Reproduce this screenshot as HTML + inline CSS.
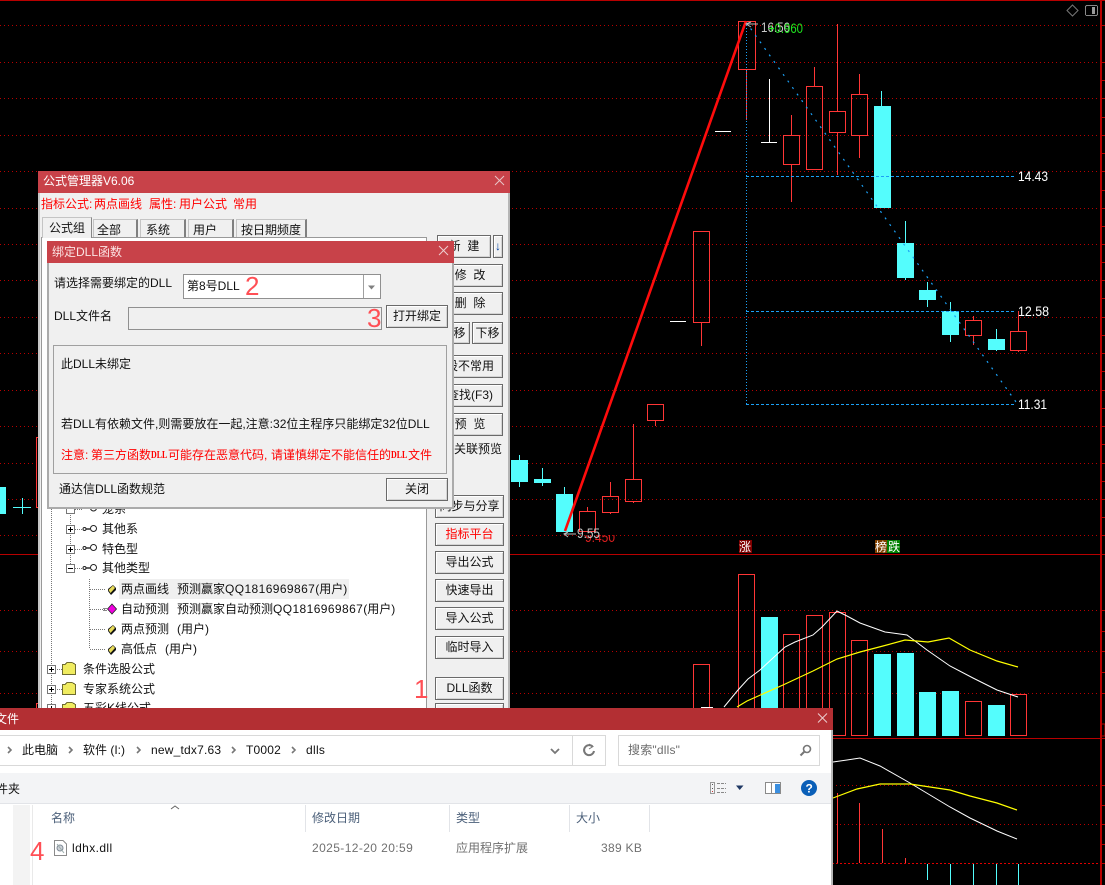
<!DOCTYPE html>
<html lang="zh">
<head>
<meta charset="utf-8">
<title>公式管理器</title>
<style>
html,body{margin:0;padding:0;background:#000;}
#p{position:relative;width:1105px;height:885px;overflow:hidden;background:#000;font:12px/16px "Liberation Sans","Noto Sans CJK SC",sans-serif;color:#111;}
svg{position:absolute;left:0;top:0;}
.a{position:absolute;box-sizing:border-box;}
.t{position:absolute;white-space:nowrap;line-height:16px;font-size:12px;}
.b{position:absolute;box-sizing:border-box;background:#f0f0f0;border:1px solid #6a6a6a;box-shadow:inset 1px 1px 0 #fff,inset -1px -1px 0 #d4d4d4;text-align:center;white-space:nowrap;font-size:12px;}
.tab{position:absolute;box-sizing:border-box;background:#f0f0f0;border:1px solid #c4c4c4;border-bottom:0;border-right:2px solid #808080;text-align:left;font-size:12px;line-height:20px;white-space:nowrap;}
.r{color:#ff0000;}
.n{position:absolute;font-size:26px;line-height:28px;color:#ff4f55;font-family:"Liberation Sans",sans-serif;}
.h{color:#4c607a;}
.c{color:#707070;}
.l{letter-spacing:.4px;}
.d{font-family:"Liberation Serif",serif;font-weight:bold;font-size:11px;transform:scaleX(.72);transform-origin:0 50%;}
</style>
</head>
<body>
<div id="p">

<svg width="1105" height="885" viewBox="0 0 1105 885" shape-rendering="crispEdges">
<defs><clipPath id="cl"><rect x="580" y="535" width="40" height="8"/></clipPath></defs>
<path d="M0 25.5H1100M0 62.5H1100M0 98.5H1100M0 135.5H1100M0 171.5H1100M0 208.5H1100M0 244.5H1100M0 280.5H1100M0 317.5H1100M0 353.5H1100M0 390.5H1100M0 426.5H1100M0 463.5H1100M0 499.5H1100M0 535.5H1100M0 610.5H1100M0 651.5H1100M0 693.5H1100M0 785.5H1100M0 824.5H1100" stroke="#b80000" stroke-dasharray="1 3" fill="none"/>
<path d="M0 863.5H1100" stroke="#e00000" stroke-dasharray="2 2" fill="none"/>
<path d="M0 0.5H1105M0 554.5H1105M0 738.5H1105" stroke="#b80000" fill="none"/>
<rect x="1100" y="0" width="2" height="885" fill="#b80000"/>
<path d="M1102 25.5h3M1102 62.5h3M1102 80.5h3M1102 98.5h3M1102 117.5h3M1102 135.5h3M1102 153.5h3M1102 171.5h3M1102 190.5h3M1102 208.5h3M1102 226.5h3M1102 244.5h3M1102 262.5h3M1102 280.5h3M1102 298.5h3M1102 317.5h3M1102 335.5h3M1102 353.5h3M1102 371.5h3M1102 390.5h3M1102 408.5h3M1102 426.5h3M1102 444.5h3M1102 463.5h3M1102 481.5h3M1102 499.5h3M1102 517.5h3M1102 535.5h3M1102 610.5h3M1102 631.5h3M1102 651.5h3M1102 672.5h3M1102 693.5h3M1102 785.5h3M1102 805.5h3M1102 824.5h3M1102 844.5h3M1102 863.5h3M1102 724h3v12h-3" stroke="#b80000" fill="none"/>

<!-- top-right icons -->
<path d="M1072.500 5L1078 10.500L1072.500 16L1067 10.500Z" fill="none" stroke="#777" shape-rendering="auto"/>
<rect x="1085.500" y="5.500" width="12" height="10" rx="1.500" fill="none" stroke="#888"/>
<rect x="1092" y="7" width="3" height="7" fill="#999"/>

<!-- candles: cyan -->
<g fill="#54fdfd">
<rect x="874" y="106" width="17" height="102"/><rect x="881" y="91" width="1" height="15"/>
<rect x="897" y="243" width="17" height="35"/><rect x="905" y="221" width="1" height="59"/>
<rect x="919" y="290" width="17" height="10"/><rect x="927" y="282" width="1" height="25"/>
<rect x="942" y="311" width="17" height="24"/><rect x="950" y="302" width="1" height="40"/>
<rect x="988" y="339" width="17" height="11"/><rect x="996" y="329" width="1" height="22"/>
<rect x="511" y="460" width="17" height="22"/><rect x="519" y="455" width="1" height="32"/>
<rect x="534" y="479" width="17" height="4"/><rect x="542" y="468" width="1" height="18"/>
<rect x="556" y="494" width="17" height="38"/><rect x="564" y="487" width="1" height="7"/>
<rect x="0" y="487" width="6" height="27"/>
<rect x="13" y="507" width="18" height="1"/><rect x="22" y="498" width="1" height="16"/>
<rect x="761" y="617" width="17" height="119"/>
<rect x="874" y="654" width="17" height="82"/>
<rect x="897" y="653" width="17" height="83"/>
<rect x="919" y="692" width="17" height="44"/>
<rect x="942" y="691" width="17" height="45"/>
<rect x="988" y="705" width="17" height="31"/>
<rect x="927" y="864" width="1" height="16"/><rect x="950" y="864" width="1" height="21"/><rect x="973" y="864" width="1" height="21"/><rect x="996" y="864" width="1" height="21"/><rect x="1018" y="864" width="1" height="21"/>
</g>

<!-- red candles -->
<g fill="none" stroke="#ff3636">
<rect x="738.5" y="21.5" width="17" height="48"/>
<rect x="783.5" y="135.5" width="16" height="29"/>
<rect x="806.5" y="86.5" width="16" height="83"/>
<rect x="829.5" y="111.5" width="16" height="21"/>
<rect x="851.5" y="94.5" width="16" height="41"/>
<rect x="965.5" y="320.5" width="16" height="15"/>
<rect x="1010.5" y="331.5" width="16" height="19"/>
<rect x="579.5" y="511.5" width="16" height="20"/>
<rect x="602.5" y="496.5" width="16" height="16"/>
<rect x="625.5" y="479.5" width="16" height="22"/>
<rect x="647.5" y="404.5" width="16" height="16"/>
<rect x="693.5" y="231.5" width="16" height="91"/>
<rect x="36.5" y="437.5" width="10" height="70"/>
<rect x="36.5" y="703.5" width="10" height="20"/>
<path d="M746.5 69V120M791.5 115V135M791.5 165V202M814.5 67V86M837.5 24V111M837.5 132V175M859.5 74V94M859.5 135V158M973.5 316V320M973.5 335V345M1018.5 311V331M1018.5 350V352M587.5 507V511M610.5 482V496M610.5 512V514M633.5 424V479M633.5 501V503M655.5 420V426M701.5 322V346"/>
<rect x="693.5" y="664.5" width="16" height="60"/>
<rect x="738.5" y="574.5" width="16" height="161"/>
<rect x="783.5" y="634.5" width="16" height="101"/>
<rect x="806.5" y="615.5" width="16" height="120"/>
<rect x="829.5" y="612.5" width="16" height="123"/>
<rect x="851.5" y="640.5" width="16" height="95"/>
<rect x="965.5" y="701.5" width="16" height="34"/>
<rect x="1010.5" y="694.5" width="16" height="41"/>
<path d="M837.5 793V863M859.5 803V863M882.5 829V863M905.5 858V863"/>
</g>

<path d="M715 131.5H731M761 142.5H777M769.5 79V142M670 321.5H686M701 707.5H713" stroke="#fff" fill="none"/>

<path d="M746 176.5H1016M746 311.5H1016M746 404.5H1016" stroke="#1ba0f5" stroke-dasharray="3 2" fill="none"/>
<path d="M746.5 22V404" stroke="#1ba0f5" stroke-dasharray="1 2" fill="none"/>
<g shape-rendering="auto" fill="none">
<path d="M746 22L1016 402" stroke="#1ba0f5" stroke-dasharray="2 6" stroke-width="1.2"/>
<path d="M565 531L746 21" stroke="#ff0c0c" stroke-width="2.6"/>
<path d="M724 707L738 690L748 679L760 670L773 658L785 647L795 642L813 635L822 627L837 611L847 616L860 623L885 632L907 635L927 650L950 666L973 678L997 690L1018 697" stroke="#fff" stroke-width="1"/>
<path d="M737 707L747 701L783 685L813 671L837 659L860 652L883 646L905 640L928 642L949 638L970 650L997 661L1018 667" stroke="#ff0" stroke-width="1.2"/>
<path d="M833 762L847 760L860 758L880 766L910 783L930 795L950 807L970 818L997 831L1017 839" stroke="#fff" stroke-width="1"/>
<path d="M833 798L857 789L880 784L910 784L930 787L950 790L970 796L997 803L1017 810" stroke="#ff0" stroke-width="1.2"/>
<path d="M751 22L746 24L751 27M746 24H758" stroke="#bbb"/>
<path d="M568 532L564 534L568 537M564 534H576" stroke="#bbb"/>
</g>

<g font-family="Liberation Sans, sans-serif" font-size="14" shape-rendering="auto">
<text x="761" y="32" fill="#c8c8c8" textLength="29" lengthAdjust="spacingAndGlyphs">16.56</text>
<text x="768" y="33" fill="#1fe51f" textLength="35" lengthAdjust="spacingAndGlyphs">+0.960</text>
<text x="1018" y="181" fill="#fff" textLength="30" lengthAdjust="spacingAndGlyphs">14.43</text>
<text x="1018" y="316" fill="#fff" textLength="31" lengthAdjust="spacingAndGlyphs">12.58</text>
<text x="1018" y="409" fill="#fff" textLength="29" lengthAdjust="spacingAndGlyphs">11.31</text>
<text x="585" y="542" fill="#e02020" textLength="30" lengthAdjust="spacingAndGlyphs" clip-path="url(#cl)">9.450</text>
<text x="577" y="538" fill="#c8c8c8" textLength="23" lengthAdjust="spacingAndGlyphs">9.55</text>
</g>
<rect x="739" y="540" width="13" height="13" fill="#800000"/>
<rect x="875" y="540" width="12" height="13" fill="#804000"/>
<rect x="887" y="540" width="13" height="13" fill="#008000"/>
<g font-family="Liberation Sans, Noto Sans CJK SC, sans-serif" font-size="12" fill="#fff" shape-rendering="auto">
<text x="739" y="551">涨</text><text x="875" y="551">榜</text><text x="888" y="551">跌</text>
</g>
</svg>

<!-- formula manager window -->
<div class="a" style="left:38px;top:171px;width:472px;height:540px;background:#f0f0f0;border-left:2px solid #c8c8c8;border-right:2px solid #b5b5b5;"></div>
<div class="a" style="left:38px;top:171px;width:472px;height:22px;background:#c84249;"></div>
<div class="t" style="left:43px;top:173px;color:#fff;">公式管理器V6.06</div>
<svg width="1105" height="885" style="pointer-events:none"><path d="M495 176L504 185M504 176L495 185" stroke="#e9c5c7" fill="none"/></svg>
<div class="t r" style="left:41px;top:196px;">指标公式:</div>
<div class="t r" style="left:94px;top:196px;">两点画线</div>
<div class="t r" style="left:149px;top:196px;">属性:</div>
<div class="t r" style="left:179px;top:196px;">用户公式</div>
<div class="t r" style="left:233px;top:196px;">常用</div>
<div class="tab" style="left:93px;top:219px;width:45px;height:19px;padding-left:3px;">全部</div>
<div class="tab" style="left:140px;top:219px;width:46px;height:19px;padding-left:5px;">系统</div>
<div class="tab" style="left:188px;top:219px;width:46px;height:19px;padding-left:4px;">用户</div>
<div class="tab" style="left:236px;top:219px;width:71px;height:19px;padding-left:4px;">按日期频度</div>
<div class="a" style="left:41px;top:237px;width:386px;height:480px;background:#fff;border:1px solid #999;"></div>
<div class="tab" style="left:42px;top:217px;width:50px;height:21px;padding-left:6px;border-right:1px solid #888;">公式组</div>

<!-- tree icons -->
<svg width="1105" height="885" shape-rendering="crispEdges">
<path d="M51.5 509V708M70.5 509V568M75 509.5H82M75 529.5H82M75 549.5H82M75 568.5H82M89.5 579V649M90 589.5H106M90 609.5H106M90 629.5H106M90 649.5H106M57 669.5H63M57 689.5H63M57 708.5H63" stroke="#777" stroke-dasharray="1 1" fill="none"/>
<g fill="#fff" stroke="#777">
<rect x="66.5" y="525.5" width="8" height="8"/><rect x="66.5" y="545.5" width="8" height="8"/><rect x="66.5" y="564.5" width="8" height="8"/><rect x="47.5" y="665.5" width="8" height="8"/><rect x="47.5" y="685.5" width="8" height="8"/><rect x="47.5" y="704.5" width="8" height="8"/><rect x="66.5" y="505.5" width="8" height="8"/>
</g>
<path d="M68 529.5h5M70.5 527v5M68 549.5h5M70.5 547v5M68 568.5h5M49 669.5h5M51.5 667v5M49 689.5h5M51.5 687v5M49 708.5h5M51.5 706v5" stroke="#000" fill="none"/>
<g fill="none" stroke="#222" shape-rendering="auto">
<circle cx="93.5" cy="528.5" r="3"/><circle cx="84.500" cy="529" r="1.500"/><path d="M86 529H90" stroke-width="1.400"/>
<circle cx="93.5" cy="547.5" r="3"/><circle cx="84.500" cy="548" r="1.500"/><path d="M86 548H90" stroke-width="1.400"/>
<circle cx="93.5" cy="567.5" r="3"/><circle cx="84.500" cy="568" r="1.500"/><path d="M86 568H90" stroke-width="1.400"/>
<circle cx="93.5" cy="508" r="3"/>
</g>
<g shape-rendering="auto">
<path d="M113 585L116 588V590L111 595L108 591V589Z" fill="#111"/><path d="M113 585.500L115 588L110.500 593L108.500 590Z" fill="#e8dc5a"/>
<path d="M112 604L116.500 609L112 614L107.500 609Z" fill="#f000e0" stroke="#222" stroke-width=".8"/>
<path d="M113 625L116 628V630L111 635L108 631V629Z" fill="#111"/><path d="M113 625.500L115 628L110.500 633L108.500 630Z" fill="#e8dc5a"/>
<path d="M113 645L116 648V650L111 655L108 651V649Z" fill="#111"/><path d="M113 645.500L115 648L110.500 653L108.500 650Z" fill="#e8dc5a"/>
</g>
<path d="M103 608.500H107M103 610.500H107" stroke="#888" fill="none"/>
<g fill="#f0ec60" stroke="#6e6b30">
<path d="M62.500 674.500V664.500H65L67 662.500H72L75.500 664.500V674.500Z"/>
<path d="M62.500 694.500V684.500H65L67 682.500H72L75.500 684.500V694.500Z"/>
<path d="M62.500 714.500V704.500H65L67 702.500H72L75.500 704.500V714.500Z"/>
</g>
</svg>
<div class="a" style="left:119px;top:579px;width:230px;height:20px;background:#f0f0f0;"></div>
<div class="t" style="left:102px;top:501px;">笼系</div>
<div class="t" style="left:102px;top:521px;">其他系</div>
<div class="t" style="left:102px;top:541px;">特色型</div>
<div class="t" style="left:102px;top:560px;">其他类型</div>
<div class="t" style="left:121px;top:581px;">两点画线</div>
<div class="t" style="left:177px;top:581px;">预测赢家<span class="l">QQ1816969867</span>(用户)</div>
<div class="t" style="left:121px;top:601px;">自动预测</div>
<div class="t" style="left:177px;top:601px;">预测赢家自动预测<span class="l">QQ1816969867</span>(用户)</div>
<div class="t" style="left:121px;top:621px;">两点预测</div>
<div class="t" style="left:177px;top:621px;">(用户)</div>
<div class="t" style="left:121px;top:641px;">高低点</div>
<div class="t" style="left:165px;top:641px;">(用户)</div>
<div class="t" style="left:83px;top:661px;">条件选股公式</div>
<div class="t" style="left:83px;top:681px;">专家系统公式</div>
<div class="t" style="left:83px;top:700px;">五彩K线公式</div>
<div class="n" style="left:414px;top:675px;">1</div>

<!-- side buttons -->
<div class="b" style="left:437px;top:235px;width:54px;height:23px;line-height:21px;">新&nbsp; 建</div>
<div class="b" style="left:493px;top:235px;width:10px;height:23px;line-height:21px;color:#0040a0;font-weight:bold;">↓</div>
<div class="b" style="left:437px;top:264px;width:66px;height:23px;line-height:21px;">修&nbsp; 改</div>
<div class="b" style="left:437px;top:292px;width:66px;height:23px;line-height:21px;">删&nbsp; 除</div>
<div class="b" style="left:437px;top:322px;width:33px;height:22px;line-height:20px;">上移</div>
<div class="b" style="left:472px;top:322px;width:31px;height:22px;line-height:20px;">下移</div>
<div class="b" style="left:437px;top:355px;width:66px;height:23px;line-height:21px;">设不常用</div>
<div class="b" style="left:437px;top:384px;width:66px;height:23px;line-height:21px;">查找(F3)</div>
<div class="b" style="left:437px;top:413px;width:66px;height:23px;line-height:21px;">预&nbsp; 览</div>
<div class="t" style="left:454px;top:441px;">关联预览</div>
<div class="b" style="left:435px;top:495px;width:69px;height:23px;line-height:21px;">同步与分享</div>
<div class="b r" style="left:435px;top:523px;width:69px;height:23px;line-height:21px;">指标平台</div>
<div class="b" style="left:435px;top:551px;width:69px;height:23px;line-height:21px;">导出公式</div>
<div class="b" style="left:435px;top:579px;width:69px;height:23px;line-height:21px;">快速导出</div>
<div class="b" style="left:435px;top:607px;width:69px;height:23px;line-height:21px;">导入公式</div>
<div class="b" style="left:435px;top:636px;width:69px;height:23px;line-height:21px;">临时导入</div>
<div class="b" style="left:435px;top:677px;width:69px;height:23px;line-height:21px;">DLL函数</div>
<div class="b" style="left:435px;top:703px;width:69px;height:23px;"></div>

<!-- DLL dialog -->
<div class="a" style="left:47px;top:241px;width:407px;height:268px;background:#f0f0f0;border:2px solid #ababab;border-top:0;"></div>
<div class="a" style="left:47px;top:241px;width:407px;height:22px;background:#c84249;"></div>
<div class="t" style="left:52px;top:244px;color:#fbe3e3;">绑定DLL函数</div>
<div class="t" style="left:54px;top:275px;">请选择需要绑定的DLL</div>
<div class="a" style="left:183px;top:274px;width:198px;height:25px;background:#fff;border:1px solid #909090;"></div>
<div class="a" style="left:363px;top:275px;width:1px;height:23px;background:#a0a0a0;"></div>
<svg width="1105" height="885"><path d="M368 285.500H375L371.500 289.500Z" fill="#808080"/></svg>
<div class="t" style="left:187px;top:278px;">第8号DLL</div>
<div class="n" style="left:245px;top:272px;">2</div>
<div class="t" style="left:54px;top:308px;">DLL文件名</div>
<div class="a" style="left:128px;top:307px;width:254px;height:23px;background:#f0f0f0;border:1px solid #909090;"></div>
<div class="n" style="left:367px;top:304px;">3</div>
<div class="b" style="left:386px;top:305px;width:62px;height:23px;line-height:21px;">打开绑定</div>
<div class="a" style="left:53px;top:345px;width:394px;height:129px;border:1px solid #a0a0a0;"></div>
<div class="t" style="left:61px;top:356px;">此DLL未绑定</div>
<div class="t" style="left:61px;top:416px;">若DLL有依赖文件,则需要放在一起,注意:32位主程序只能绑定32位DLL</div>
<div class="t r" style="left:61px;top:447px;">注意:</div>
<div class="t r" style="left:91px;top:447px;">第三方函数</div>
<div class="t r d" style="left:151px;top:447px;">DLL</div>
<div class="t r" style="left:168px;top:447px;">可能存在恶意代码,</div>
<div class="t r" style="left:271px;top:447px;">请谨慎绑定不能信任的</div>
<div class="t r d" style="left:391px;top:447px;">DLL</div>
<div class="t r" style="left:408px;top:447px;">文件</div>
<div class="t" style="left:59px;top:481px;">通达信DLL函数规范</div>
<div class="b" style="left:386px;top:478px;width:62px;height:23px;line-height:21px;">关闭</div>
<svg width="1105" height="885"><path d="M439 246L448 255M448 246L439 255" stroke="#eccfd0" fill="none"/></svg>

<!-- explorer -->
<div class="a" style="left:0;top:708px;width:833px;height:177px;background:#fff;border-right:2px solid #b8b8b8;"></div>
<div class="a" style="left:0;top:708px;width:833px;height:22px;background:#b32f33;"></div>
<div class="t" style="left:-5px;top:711px;color:#fff;">文件</div>
<div class="a" style="left:-2px;top:735px;width:608px;height:31px;border:1px solid #d9d9d9;"></div>
<div class="a" style="left:572px;top:735px;width:1px;height:31px;background:#d9d9d9;"></div>
<div class="a" style="left:618px;top:735px;width:202px;height:31px;border:1px solid #d9d9d9;"></div>
<div class="t" style="left:22px;top:742px;">此电脑</div>
<div class="t" style="left:83px;top:742px;">软件 (I:)</div>
<div class="t" style="left:151px;top:742px;letter-spacing:.2px;">new_tdx7.63</div>
<div class="t" style="left:246px;top:742px;letter-spacing:.2px;">T0002</div>
<div class="t" style="left:306px;top:742px;letter-spacing:.3px;">dlls</div>
<div class="t" style="left:628px;top:742px;color:#6d6d6d;letter-spacing:.2px;">搜索"dlls"</div>
<div class="a" style="left:0;top:773px;width:831px;height:31px;background:#f3f4f6;border-bottom:1px solid #e2e4e8;"></div>
<div class="t" style="left:-4px;top:781px;">件夹</div>
<div class="a" style="left:13px;top:805px;width:17px;height:80px;background:#f3f3f3;"></div>
<div class="a" style="left:32px;top:805px;width:1px;height:80px;background:#e9e9e9;"></div>
<div class="a" style="left:305px;top:805px;width:1px;height:27px;background:#e2e4e8;"></div>
<div class="a" style="left:449px;top:805px;width:1px;height:27px;background:#e2e4e8;"></div>
<div class="a" style="left:569px;top:805px;width:1px;height:27px;background:#e2e4e8;"></div>
<div class="a" style="left:649px;top:805px;width:1px;height:27px;background:#e2e4e8;"></div>
<div class="t h" style="left:51px;top:810px;">名称</div>
<div class="t h" style="left:312px;top:810px;">修改日期</div>
<div class="t h" style="left:456px;top:810px;">类型</div>
<div class="t h" style="left:576px;top:810px;">大小</div>
<div class="n" style="left:30px;top:837px;">4</div>
<div class="t" style="left:72px;top:840px;letter-spacing:.4px;">ldhx.dll</div>
<div class="t c" style="left:312px;top:840px;letter-spacing:.4px;">2025-12-20 20:59</div>
<div class="t c" style="left:456px;top:840px;">应用程序扩展</div>
<div class="t c" style="left:601px;top:840px;letter-spacing:.3px;">389 KB</div>

<svg width="1105" height="885">
<g fill="none" stroke="#777" stroke-width="1.600">
<path d="M8 747L11 750L8 753M69 747L72 750L69 753M137 747L140 750L137 753M232 747L235 750L232 753M292 747L295 750L292 753"/>
<path d="M551 749L555 753L559 749" stroke-width="1.800"/>
<path d="M592.500 746.500A5 5 0 1 0 594 751" stroke-width="2"/>
<path d="M589 744L593 746.500L589 749" stroke-width="1"/>
<circle cx="807" cy="749" r="3.500"/><path d="M804.500 751.500L800.500 755.500" stroke-width="2"/>
<path d="M171 809L175 806L179 809" stroke="#666" stroke-width="1"/>
</g>
<path d="M818 713.500L827 722.500M827 713.500L818 722.500" stroke="#eccfd0" fill="none"/>
<g shape-rendering="crispEdges">
<g fill="none" stroke="#999"><rect x="710.500" y="782.500" width="4" height="11"/></g>
<path d="M717 783.500h9M717 788.500h9M717 792.500h9" stroke="#888" stroke-dasharray="3 1" fill="none"/>
<rect x="712" y="784" width="1" height="1" fill="#555"/><rect x="712" y="788" width="1" height="1" fill="#555"/><rect x="712" y="791" width="1" height="1" fill="#c33"/>
<rect x="765.500" y="782.500" width="15" height="11" fill="#fff" stroke="#8a8a8a"/>
<rect x="775" y="784" width="5" height="9" fill="#3b8fe0"/>
<rect x="771" y="783" width="1" height="10" fill="#8a8a8a"/>
</g>
<path d="M736 785.500H743.500L739.700 790Z" fill="#1f3864"/>
<circle cx="809" cy="788" r="8" fill="#0a5fb8"/>
<text x="805.500" y="792.500" font-family="Liberation Sans, sans-serif" font-size="12" font-weight="bold" fill="#fff">?</text>
<path d="M54.500 840.500H63L66.500 844V855.500H54.500Z" fill="#fff" stroke="#8a8a8a"/>
<circle cx="60" cy="848" r="3" fill="#cfd3d8" stroke="#7f8a96"/>
<path d="M57 844L64 853" stroke="#9aa" fill="none"/>
</svg>

</div>
</body>
</html>
